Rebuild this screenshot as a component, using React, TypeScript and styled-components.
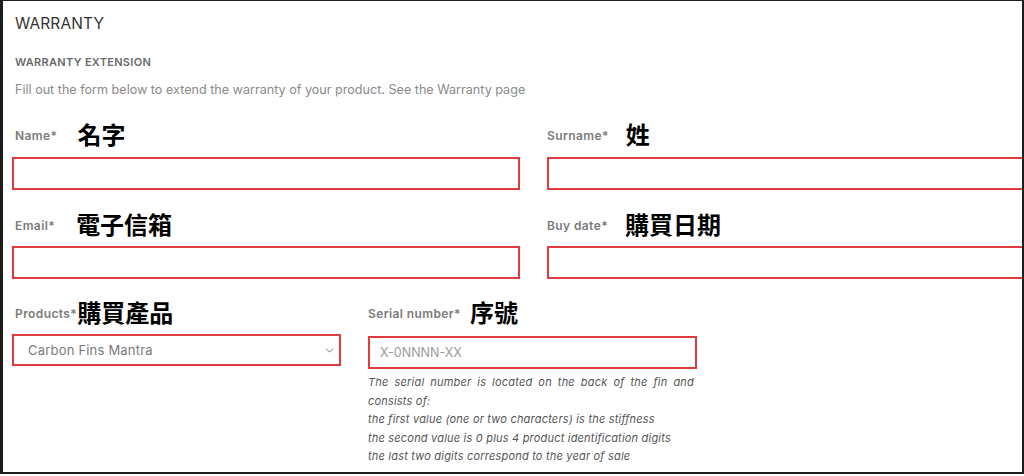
import React from 'react';
import styled, { createGlobalStyle } from 'styled-components';
import { ChevronDown } from 'lucide-react';

/**
 * 전역 스타일 - 기본 여백 제거와 글꼴 지정
 */
const GlobalStyle = createGlobalStyle`
  html, body {
    margin: 0;
    padding: 0;
    background: #ffffff;
  }
  body {
    font-family: Inter, "Noto Sans", sans-serif;
  }
`;

interface FieldProps {
  label: string;
  note: string;
  noteGap: number;
  children: React.ReactNode;
  inputTop?: number;
  indent?: number;
}

/**
 * 라벨 + 주석(중국어) + 입력칸 묶음
 */
const Field: React.FC<FieldProps> = ({ label, note, noteGap, children, inputTop = 9, indent = 3 }) => (
  <FieldBox>
    <LabelRow $gap={noteGap} $indent={indent}>
      <Label>{label}</Label>
      <Note>{note}</Note>
    </LabelRow>
    <InputSlot $top={inputTop}>{children}</InputSlot>
  </FieldBox>
);

const App: React.FC = () => {
  return (
    <>
      <GlobalStyle />
      <Frame>
        <Title>WARRANTY</Title>
        <Subtitle>WARRANTY EXTENSION</Subtitle>
        <Description>
          Fill out the form below to extend the warranty of your product. See the Warranty page
        </Description>

        {/* 이름 / 성 */}
        <Row $col={508} $top={21}>
          <Field label="Name*" note="名字" noteGap={20}>
            <TextInput type="text" />
          </Field>
          <Field label="Surname*" note="姓" noteGap={17} indent={0}>
            <TextInput type="text" />
          </Field>
        </Row>

        {/* 이메일 / 구매일 */}
        <Row $col={508} $top={20}>
          <Field label="Email*" note="電子信箱" noteGap={21} inputTop={8}>
            <TextInput type="text" />
          </Field>
          <Field label="Buy date*" note="購買日期" noteGap={17} inputTop={8} indent={0}>
            <TextInput type="text" />
          </Field>
        </Row>

        {/* 제품 / 시리얼 */}
        <Row $col={329} $top={19}>
          <Field label="Products*" note="購買產品" noteGap={0} inputTop={8}>
            <SelectBox>
              <span>Carbon Fins Mantra</span>
              <ChevronDown size={13} strokeWidth={1.6} color="#666" />
            </SelectBox>
          </Field>
          <Field label="Serial number*" note="序號" noteGap={9} inputTop={10} indent={0}>
            <TextInput type="text" placeholder="X-0NNNN-XX" />
            <HelpText>
              The serial number is located on the back of the fin and consists of:
              <br />
              the first value (one or two characters) is the stiffness
              <br />
              the second value is 0 plus 4 product identification digits
              <br />
              the last two digits correspond to the year of sale
            </HelpText>
          </Field>
        </Row>
      </Frame>
    </>
  );
};

/* ===================== styled components ===================== */

const Frame = styled.div`
  width: 1024px;
  height: 474px;
  box-sizing: border-box;
  border: 2px solid #1d1d1d;
  border-left-width: 3px;
  border-top-width: 1px;
  padding: 13px 0 0 9px;
  overflow: hidden;
  background: #ffffff;
  display: flex;
  flex-direction: column;
`;

const Title = styled.h1`
  margin: 0;
  padding-left: 3px;
  font-size: 15.5px;
  line-height: 20px;
  font-weight: 400;
  color: #333333;
  letter-spacing: 0.1px;
`;

const Subtitle = styled.h2`
  margin: 20px 0 0;
  padding-left: 3px;
  font-size: 11px;
  line-height: 16px;
  font-weight: 600;
  color: #6b6b6b;
  letter-spacing: 0.3px;
`;

const Description = styled.p`
  margin: 11px 0 0;
  padding-left: 3px;
  font-size: 12.6px;
  line-height: 18px;
  color: #8a8a8a;
  white-space: nowrap;
`;

const Row = styled.div<{ $col: number; $top: number }>`
  display: grid;
  grid-template-columns: ${(p) => p.$col}px ${(p) => p.$col}px;
  column-gap: 27px;
  margin-top: ${(p) => p.$top}px;
  align-items: start;
`;

const FieldBox = styled.div`
  display: flex;
  flex-direction: column;
`;

const LabelRow = styled.div<{ $gap: number; $indent: number }>`
  display: flex;
  align-items: center;
  gap: ${(p) => p.$gap}px;
  height: 28px;
  padding-left: ${(p) => p.$indent}px;
`;

const Label = styled.span`
  font-size: 12px;
  font-weight: 600;
  color: #7a7a7a;
  letter-spacing: 0.4px;
  padding-top: 3px;
`;

const Note = styled.span`
  font-family: "Noto Sans CJK TC", "Noto Sans CJK SC", sans-serif;
  font-size: 24px;
  font-weight: 700;
  color: #000000;
  line-height: 28px;
`;

const InputSlot = styled.div<{ $top: number }>`
  margin-top: ${(p) => p.$top}px;
  display: flex;
  flex-direction: column;
`;

const TextInput = styled.input`
  box-sizing: border-box;
  width: 100%;
  height: 33px;
  margin: 0;
  border: 2px solid #e23b3f;
  border-radius: 0;
  background: #ffffff;
  padding: 0 10px;
  font-family: Inter, sans-serif;
  font-size: 12.5px;
  color: #555555;
  outline: none;

  &::placeholder {
    color: #9a9a9a;
  }
`;

const SelectBox = styled.div`
  box-sizing: border-box;
  height: 32px;
  border: 2px solid #e23b3f;
  background: #ffffff;
  display: flex;
  align-items: center;
  justify-content: space-between;
  padding: 0 3px 0 14px;
  font-size: 13px;
  color: #7a7a7a;
  letter-spacing: 0.2px;
`;

const HelpText = styled.p`
  margin: 4px 0 0;
  width: 326px;
  font-size: 11px;
  line-height: 18.5px;
  font-style: italic;
  color: #555555;
  text-align: justify;
  letter-spacing: 0.2px;
`;

export default App;
